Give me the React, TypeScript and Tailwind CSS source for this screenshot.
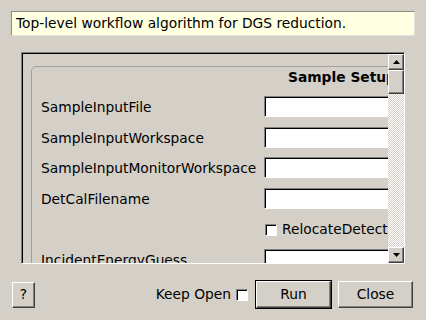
import React from 'react'

const raised =
  'bg-[#d4d0c8] border border-t-white border-l-white border-r-[#404040] border-b-[#404040] shadow-[inset_-1px_-1px_0_#808080]'
const sunken =
  'bg-white border border-t-[#808080] border-l-[#808080] border-r-white border-b-white shadow-[inset_1px_1px_0_#000]'

function Arrow({ dir }: { dir: 'up' | 'down' }) {
  return (
    <svg width="7" height="4" viewBox="0 0 7 4">
      {dir === 'up' ? <path d="M3.5 0 L7 4 L0 4 Z" fill="#000" /> : <path d="M0 0 L7 0 L3.5 4 Z" fill="#000" />}
    </svg>
  )
}

function Field({ label, mt }: { label: string; mt: string }) {
  return (
    <div className={`flex items-center h-[21px] ${mt}`}>
      <span className="w-[223px] shrink-0 whitespace-nowrap pt-[2px]">{label}</span>
      <div className={`h-[21px] flex-1 ${sunken}`} />
    </div>
  )
}

export default function App() {
  return (
    <div className="w-[426px] h-[320px] bg-[#d4d0c8] flex flex-col overflow-hidden text-[13.8px] text-black font-['DejaVu_Sans',sans-serif]">
      {/* Description */}
      <div className="mx-[11px] mt-[11px] h-[25px] px-[4px] flex items-center bg-[#ffffe1] border border-t-[#8a8a8a] border-l-[#8a8a8a] border-r-[#e4e2dc] border-b-[#e4e2dc] whitespace-nowrap">
        Top-level workflow algorithm for DGS reduction.
      </div>

      {/* Scroll area */}
      <div className="ml-[21px] mt-[16px] w-[384px] h-[212px] flex border border-t-[#808080] border-l-[#808080] border-r-white border-b-white">
        <div className="flex flex-1 min-w-0 border-t border-l border-black">
          <div className="flex-1 min-w-0 overflow-hidden pl-[8px] pt-[12px]">
            <div className="w-[622px] border border-[#a0a0a0] rounded-[5px] pl-[9px] pr-[9px] pb-[10px]">
              <div className="text-center font-bold leading-[16px] pt-[2px]">Sample Setup</div>
              <div className="mt-[11px] flex flex-col">
                <Field label="SampleInputFile" mt="" />
                <Field label="SampleInputWorkspace" mt="mt-[10px]" />
                <Field label="SampleInputMonitorWorkspace" mt="mt-[9px]" />
                <Field label="DetCalFilename" mt="mt-[10px]" />
                <div className="flex items-center h-[21px] mt-[10px]">
                  <span className="w-[223px] shrink-0" />
                  <div className={`w-[12px] h-[12px] ml-[1px] ${sunken}`} />
                  <span className="ml-[5px] whitespace-nowrap">RelocateDetectors</span>
                </div>
                <Field label="IncidentEnergyGuess" mt="mt-[9px]" />
              </div>
            </div>
          </div>
          {/* Scrollbar */}
          <div className="w-[16px] shrink-0 flex flex-col">
            <div className={`h-[16px] flex items-center justify-center ${raised}`}>
              <Arrow dir="up" />
            </div>
            <div className={`h-[24px] ${raised}`} />
            <div className="flex-1 bg-[repeating-conic-gradient(#d4d0c8_0_25%,#ffffff_0_50%)] bg-[length:2px_2px]" />
            <div className={`h-[16px] flex items-center justify-center ${raised}`}>
              <Arrow dir="down" />
            </div>
          </div>
        </div>
      </div>

      {/* Buttons */}
      <div className="mt-[16px] h-[29px] flex items-center pl-[12px] pr-[13px]">
        <button className={`w-[23px] h-[26px] flex items-center justify-center ${raised}`}>?</button>
        <span className="ml-auto whitespace-nowrap">Keep Open</span>
        <div className={`ml-[5px] w-[12px] h-[12px] ${sunken}`} />
        <button className="ml-[7px] w-[77px] h-[29px] border border-black flex">
          <span className={`flex-1 flex items-center justify-center ${raised}`}>Run</span>
        </button>
        <button className={`ml-[6px] w-[75px] h-[27px] flex items-center justify-center ${raised}`}>Close</button>
      </div>
    </div>
  )
}
